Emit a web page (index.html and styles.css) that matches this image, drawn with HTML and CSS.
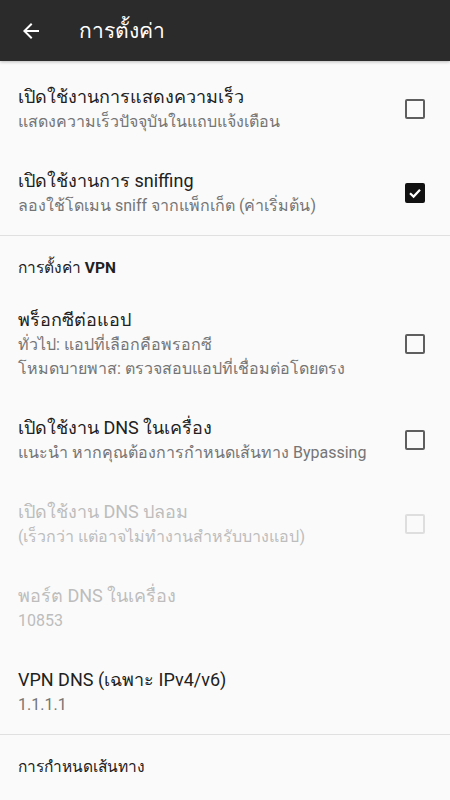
FILE: index.html
```html
<!DOCTYPE html>
<html lang="th">
<head>
  <meta charset="UTF-8" />
  <meta name="viewport" content="width=device-width, initial-scale=1.0"/>
  <title>การตั้งค่า</title>
  <link rel="stylesheet" href="styles.css">
</head>
<body>
  <header class="toolbar">
    <svg class="back" viewBox="0 0 24 24" width="24" height="24">
      <path fill="#fff" d="M20 11H7.83l5.59-5.59L12 4l-8 8 8 8 1.41-1.41L7.83 13H20v-2z"/>
    </svg>
    <h1>การตั้งค่า</h1>
  </header>

  <main class="list">
    <div class="row">
      <div class="text">
        <div class="title">เปิดใช้งานการแสดงความเร็ว</div>
        <div class="summary">แสดงความเร็วปัจจุบันในแถบแจ้งเตือน</div>
      </div>
      <span class="check"></span>
    </div>

    <div class="row">
      <div class="text">
        <div class="title">เปิดใช้งานการ sniffing</div>
        <div class="summary">ลองใช้โดเมน sniff จากแพ็กเก็ต (ค่าเริ่มต้น)</div>
      </div>
      <span class="check on">
        <svg viewBox="0 0 20 20" width="20" height="20">
          <path fill="none" stroke="#fff" stroke-width="2.2" d="M5 10.2 L8.6 13.6 L15 6.8"/>
        </svg>
      </span>
    </div>

    <div class="divider"></div>
    <div class="category">การตั้งค่า <b>VPN</b></div>

    <div class="row">
      <div class="text">
        <div class="title">พร็อกซีต่อแอป</div>
        <div class="summary">ทั่วไป: แอปที่เลือกคือพรอกซี<br>โหมดบายพาส: ตรวจสอบแอปที่เชื่อมต่อโดยตรง</div>
      </div>
      <span class="check"></span>
    </div>

    <div class="row">
      <div class="text">
        <div class="title">เปิดใช้งาน DNS ในเครื่อง</div>
        <div class="summary">แนะนำ หากคุณต้องการกำหนดเส้นทาง Bypassing</div>
      </div>
      <span class="check"></span>
    </div>

    <div class="row disabled">
      <div class="text">
        <div class="title">เปิดใช้งาน DNS ปลอม</div>
        <div class="summary">(เร็วกว่า แต่อาจไม่ทำงานสำหรับบางแอป)</div>
      </div>
      <span class="check"></span>
    </div>

    <div class="row disabled">
      <div class="text">
        <div class="title">พอร์ต DNS ในเครื่อง</div>
        <div class="summary">10853</div>
      </div>
    </div>

    <div class="row">
      <div class="text">
        <div class="title">VPN DNS (เฉพาะ IPv4/v6)</div>
        <div class="summary">1.1.1.1</div>
      </div>
    </div>

    <div class="divider"></div>
    <div class="category">การกำหนดเส้นทาง</div>
  </main>
</body>
</html>
```

FILE: styles.css
```css
body {
  margin: 0;
  background: #fafafa;
  font-family: Roboto, sans-serif;
  color: #212121;
  overflow: hidden;
}

.toolbar {
  height: 61px;
  background: #2b2b2b;
  display: flex;
  align-items: center;
  padding-left: 19px;
  box-shadow: 0 1px 3px rgba(0, 0, 0, 0.25);
}

.toolbar .back {
  flex: none;
}

.toolbar h1 {
  margin: 0 0 0 36px;
  font-size: 21px;
  font-weight: normal;
  color: #fff;
}

.list {
  padding-top: 6px;
}

.row {
  display: flex;
  align-items: center;
  padding: 17px 25px 17px 18px;
}

.text {
  flex: 1;
}

.title {
  font-size: 18px;
  line-height: 26px;
}

.summary {
  font-size: 16px;
  line-height: 24px;
  color: #757575;
}

.disabled .title,
.disabled .summary {
  color: #bdbdbd;
}

.check {
  flex: none;
  width: 16px;
  height: 16px;
  border: 2px solid #5e5e5e;
  border-radius: 2px;
}

.check.on {
  background: #111;
  border-color: #111;
  position: relative;
}

.check.on svg {
  position: absolute;
  left: -2px;
  top: -2px;
}

.disabled .check {
  border-color: #dedede;
}

.divider {
  height: 1px;
  background: #e0e0e0;
}

.category {
  font-size: 15.5px;
  line-height: 22px;
  padding: 21px 18px 11px;
}

.category b {
  font-weight: bold;
}
```
